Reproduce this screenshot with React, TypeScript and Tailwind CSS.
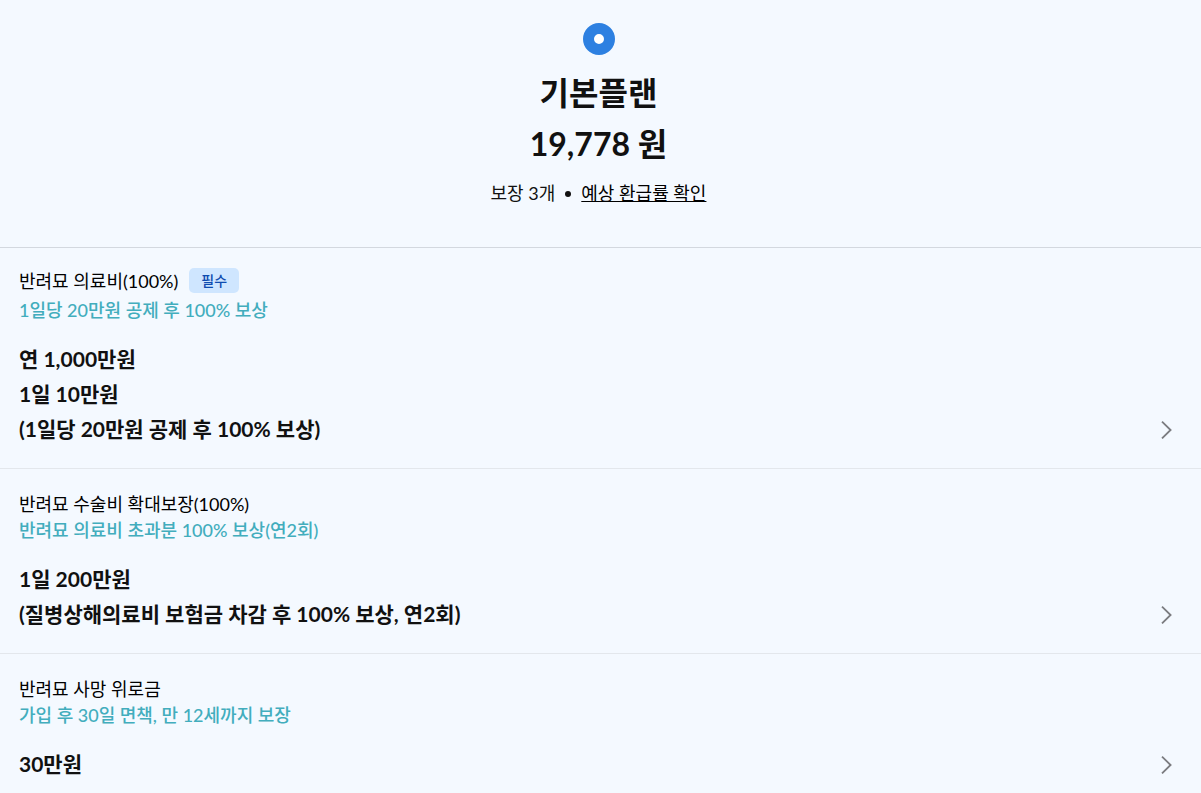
import React from "react";

type Coverage = {
  title: string;
  required?: boolean;
  note: string;
  amounts: string[];
};

const coverages: Coverage[] = [
  {
    title: "반려묘 의료비(100%)",
    required: true,
    note: "1일당 20만원 공제 후 100% 보상",
    amounts: ["연 1,000만원", "1일 10만원", "(1일당 20만원 공제 후 100% 보상)"],
  },
  {
    title: "반려묘 수술비 확대보장(100%)",
    note: "반려묘 의료비 초과분 100% 보상(연2회)",
    amounts: ["1일 200만원", "(질병상해의료비 보험금 차감 후 100% 보상, 연2회)"],
  },
  {
    title: "반려묘 사망 위로금",
    note: "가입 후 30일 면책, 만 12세까지 보장",
    amounts: ["30만원"],
  },
];

const ChevronIcon = () => (
  <svg width="12" height="20" viewBox="0 0 12 20" fill="none" aria-hidden="true">
    <path d="M2 2.6L10.6 11L2 19.4" stroke="#7b7c80" strokeWidth="1.8" />
  </svg>
);

const CoverageRow = ({ item }: { item: Coverage }) => (
  <li className={`border-b border-[#e3e7ec] pr-[23px] pb-[22px] pl-[19px] ${item.required ? "pt-5" : "pt-[22px]"}`}>
    <div className={`flex items-start gap-[11px] ${item.required ? "mb-[3px]" : ""}`}>
      <h2 className="text-[18px] leading-[26px] text-black">{item.title}</h2>
      {item.required && (
        <span className="rounded-[5px] bg-[#cfe6ff] px-3 text-[14px] leading-[25px] font-medium text-[#0f4cb0]">필수</span>
      )}
    </div>
    <p className="text-[18px] leading-[26px] font-medium text-[#42adbd]">{item.note}</p>
    <div className="mt-[18px] flex items-end justify-between">
      <div className="text-[21px] leading-[35px] font-bold">
        {item.amounts.map((line) => (
          <p key={line}>{line}</p>
        ))}
      </div>
      <button type="button" aria-label={`${item.title} 상세보기`} className="grid h-[35px] w-6 place-items-center">
        <ChevronIcon />
      </button>
    </div>
  </li>
);

export default function App() {
  return (
    <main className="min-h-screen bg-[#f4f9ff] font-['Lato','Noto_Sans_CJK_KR',sans-serif] text-[#111]">
      <header className="flex flex-col items-center border-b border-[#d3d8df] pt-[23px] pr-1 pb-[39px]">
        <input type="radio" id="plan-basic" name="plan" defaultChecked className="size-8 appearance-none rounded-full border-[11px] border-[#2d80e1] bg-white" />
        <label htmlFor="plan-basic" className="mt-3 text-center text-[32px] leading-[51px] font-bold">
          <span className="block">기본플랜</span>
          <span className="block">19,778 원</span>
        </label>
        <div className="mt-[10px] flex items-center text-[18px] leading-[29px]">
          <span>보장 3개</span>
          <span className="mx-[10px] size-[6px] rounded-full bg-[#111]" />
          <a href="#refund" className="text-black underline">예상 환급률 확인</a>
        </div>
      </header>
      <ul>
        {coverages.map((item) => (
          <CoverageRow key={item.title} item={item} />
        ))}
      </ul>
    </main>
  );
}
